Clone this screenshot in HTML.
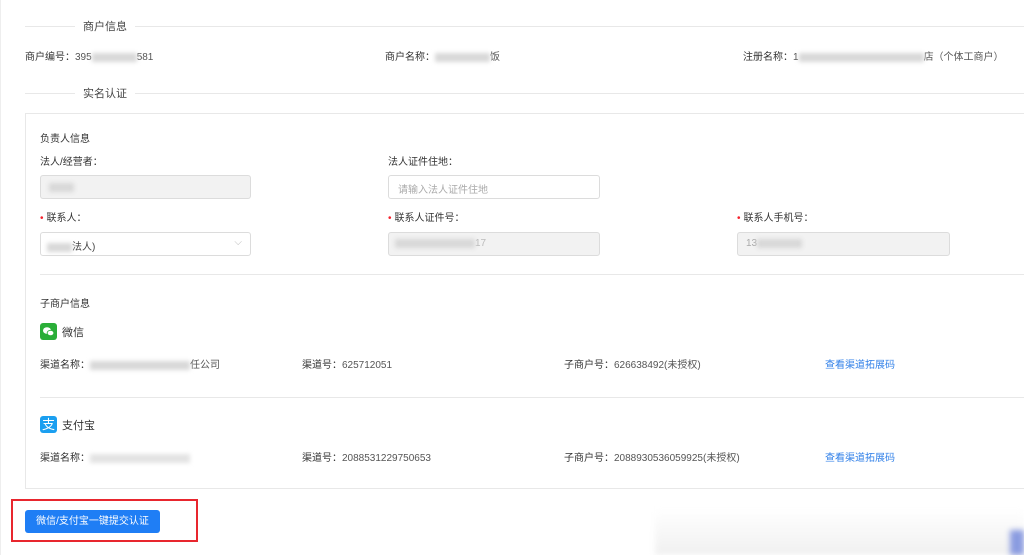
<!DOCTYPE html>
<html><head><meta charset="utf-8"><style>
*{margin:0;padding:0;box-sizing:border-box}
body{width:1024px;height:555px;background:#fff;position:relative;overflow:hidden;font-family:"Liberation Sans","Noto Sans CJK SC",sans-serif;font-size:10px;color:#555}
.a{position:absolute;white-space:nowrap}
.hl{position:absolute;height:1px;background:#e8e8e8}
.lbl{color:#333}
.in{position:absolute;height:24px;border:1px solid #dcdcdc;border-radius:3px;background:#f2f2f2}
.blur{display:inline-block;background:#d8d8d8;filter:blur(2px);height:9px;vertical-align:middle}
.req{color:#f5222d;margin-right:3px}
.link{color:#2f7fe8}
</style></head><body>
<div class="hl" style="left:0;top:0;width:1px;height:555px;background:#eee"></div>
<div class="hl" style="left:25px;top:26px;width:50px"></div>
<div class="a" style="left:83px;top:18px;font-size:11px;color:#444">商户信息</div>
<div class="hl" style="left:135px;top:26px;width:889px"></div>
<div class="a" style="left:25px;top:48px"><span class="lbl">商户编号：</span>395<span class="blur" style="width:45px"></span>581</div>
<div class="a" style="left:385px;top:48px"><span class="lbl">商户名称：</span><span class="blur" style="width:55px"></span>饭</div>
<div class="a" style="left:743px;top:48px"><span class="lbl">注册名称：</span>1<span class="blur" style="width:125px"></span>店（个体工商户）</div>
<div class="hl" style="left:25px;top:93px;width:50px"></div>
<div class="a" style="left:83px;top:85px;font-size:11px;color:#444">实名认证</div>
<div class="hl" style="left:135px;top:93px;width:889px"></div>
<div style="position:absolute;left:25px;top:113px;width:1010px;height:376px;border:1px solid #e8e8e8"></div>
<div class="a lbl" style="left:40px;top:130px">负责人信息</div>
<div class="a lbl" style="left:40px;top:153px">法人/经营者：</div>
<div class="a lbl" style="left:388px;top:153px">法人证件住地：</div>
<div class="in" style="left:40px;top:175px;width:211px"><span class="blur" style="width:25px;margin:7px 0 0 8px"></span></div>
<div class="in" style="left:388px;top:175px;width:212px;background:#fff;color:#aaa;padding:5px 0 0 9px">请输入法人证件住地</div>
<div class="a lbl" style="left:40px;top:209px"><span class="req">•</span>联系人：</div>
<div class="a lbl" style="left:388px;top:209px"><span class="req">•</span>联系人证件号：</div>
<div class="a lbl" style="left:737px;top:209px"><span class="req">•</span>联系人手机号：</div>
<div class="in" style="left:40px;top:232px;width:211px;background:#fff;padding:5px 0 0 6px;color:#444"><span class="blur" style="width:25px"></span>法人)<span style="position:absolute;right:8px;top:4px;color:#bbb">⌵</span></div>
<div class="in" style="left:388px;top:232px;width:212px;padding:5px 0 0 6px;color:#bbb"><span class="blur" style="width:80px"></span>17</div>
<div class="in" style="left:737px;top:232px;width:213px;padding:5px 0 0 8px;color:#aaa">13<span class="blur" style="width:45px"></span></div>
<div class="hl" style="left:40px;top:274px;width:984px"></div>
<div class="a lbl" style="left:40px;top:295px">子商户信息</div>
<div style="position:absolute;left:40px;top:323px;width:17px;height:17px;background:#2aae38;border-radius:3px"><svg width="17" height="17" viewBox="0 0 17 17"><ellipse cx="7" cy="7.5" rx="4" ry="3.3" fill="#fff"/><ellipse cx="10.5" cy="10" rx="3.3" ry="2.7" fill="#fff" stroke="#2aae38" stroke-width=".8"/></svg></div>
<div class="a" style="left:62px;top:324px;font-size:11px;color:#333">微信</div>
<div class="a" style="left:40px;top:356px"><span class="lbl">渠道名称：</span><span class="blur" style="width:100px"></span>任公司</div>
<div class="a" style="left:302px;top:356px"><span class="lbl">渠道号：</span>625712051</div>
<div class="a" style="left:564px;top:356px"><span class="lbl">子商户号：</span>626638492(未授权)</div>
<div class="a link" style="left:825px;top:356px">查看渠道拓展码</div>
<div class="hl" style="left:40px;top:397px;width:984px"></div>
<div style="position:absolute;left:40px;top:416px;width:17px;height:17px;background:#1b9ff0;border-radius:3px;color:#fff;font-size:13px;line-height:17px;text-align:center">支</div>
<div class="a" style="left:62px;top:417px;font-size:11px;color:#333">支付宝</div>
<div class="a" style="left:40px;top:449px"><span class="lbl">渠道名称：</span><span class="blur" style="width:100px;background:#e3e3e3"></span></div>
<div class="a" style="left:302px;top:449px"><span class="lbl">渠道号：</span>2088531229750653</div>
<div class="a" style="left:564px;top:449px"><span class="lbl">子商户号：</span>2088930536059925(未授权)</div>
<div class="a link" style="left:825px;top:449px">查看渠道拓展码</div>
<div style="position:absolute;left:11px;top:499px;width:187px;height:43px;border:2px solid #e8262e"></div>
<div style="position:absolute;left:25px;top:510px;width:135px;height:23px;background:#1f7ef5;border-radius:3px;color:#fff;text-align:center;line-height:23px">微信/支付宝一键提交认证</div>
<div style="position:absolute;left:655px;top:508px;width:369px;height:47px;background:linear-gradient(#fff,#f0f0f0);filter:blur(3px)"></div>
<div style="position:absolute;left:1010px;top:530px;width:14px;height:25px;background:#8a9be0;filter:blur(3px)"></div>
</body></html>
